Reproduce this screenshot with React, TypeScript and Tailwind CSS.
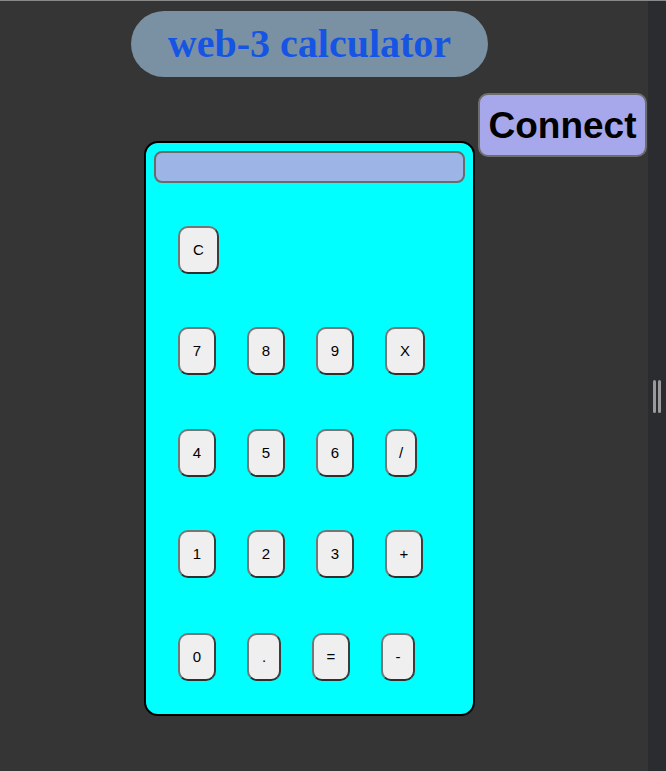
const rows: { label: string; w: number }[][] = [
  [{ label: "C", w: 41 }],
  [
    { label: "7", w: 38 },
    { label: "8", w: 38 },
    { label: "9", w: 38 },
    { label: "X", w: 40 },
  ],
  [
    { label: "4", w: 38 },
    { label: "5", w: 38 },
    { label: "6", w: 38 },
    { label: "/", w: 32 },
  ],
  [
    { label: "1", w: 38 },
    { label: "2", w: 38 },
    { label: "3", w: 38 },
    { label: "+", w: 38 },
  ],
  [
    { label: "0", w: 38 },
    { label: ".", w: 34 },
    { label: "=", w: 38 },
    { label: "-", w: 34 },
  ],
];

const rowTop = ["mt-[43px]", "mt-[53px]", "mt-[54px]", "mt-[53px]", "mt-[55px]"];

function Key({ label, w }: { label: string; w: number }) {
  return (
    <button
      className="h-[48px] shrink-0 rounded-[10px] border-2 border-[#767676] border-b-[#2f2f2f] border-r-[#3c3c3c] bg-[#efefef] text-[15px] text-black font-['Liberation_Sans',Arial,sans-serif]"
      style={{ width: w }}
    >
      {label}
    </button>
  );
}

export default function App() {
  return (
    <div className="flex h-[771px] w-[666px] overflow-hidden border-t border-[#8a8a8a] bg-[#353535]">
      <div className="w-[648px] shrink-0">
        {/* title */}
        <div className="ml-[131px] mt-[10px] flex h-[66px] w-[357px] items-center justify-center rounded-[33px] bg-[#7a91a3]">
          <h1 className="font-['Liberation_Serif','Times_New_Roman',serif] text-[40px] font-bold text-[#1655e3] leading-none">
            web-3 calculator
          </h1>
        </div>

        <button className="float-right mr-[1px] mt-[16px] h-[64px] w-[169px] rounded-[10px] border-2 border-[#6e6e6e] bg-[#a7a7eb] font-['Liberation_Sans',Arial,sans-serif] text-[37px] font-bold text-black leading-none">
          Connect
        </button>

        {/* calculator */}
        <div className="ml-[144px] mt-[64px] h-[575px] w-[331px] rounded-[14px] border-2 border-black bg-[#00ffff] px-[8px] pt-[8px]">
          <input
            readOnly
            className="block h-[32px] w-[311px] rounded-[8px] border-2 border-[#6b6b6b] bg-[#9db4e6] outline-none"
          />
          <div className="pl-[24px]">
            {rows.map((row, i) => (
              <div key={i} className={`flex gap-[31px] ${rowTop[i]}`}>
                {row.map((k) => (
                  <Key key={k.label} label={k.label} w={k.w} />
                ))}
              </div>
            ))}
          </div>
        </div>
      </div>

      {/* side strip */}
      <div className="flex w-[18px] items-center justify-center bg-[#2b2c30]">
        <div className="flex gap-[2px] pt-[20px]">
          <div className="h-[33px] w-[3px] rounded-sm bg-[#9a9a9a]" />
          <div className="h-[33px] w-[3px] rounded-sm bg-[#9a9a9a]" />
        </div>
      </div>
    </div>
  );
}
